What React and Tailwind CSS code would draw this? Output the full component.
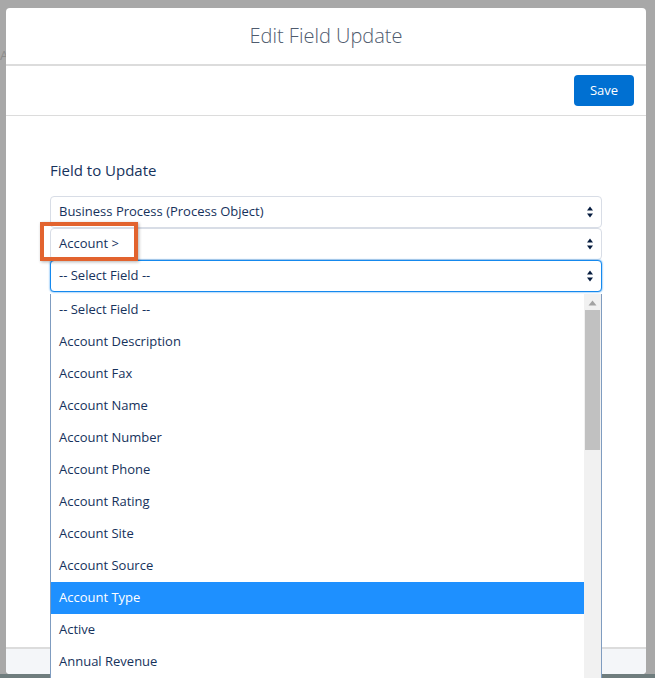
import React from 'react'

const fields = [
  'Account Description',
  'Account Fax',
  'Account Name',
  'Account Number',
  'Account Phone',
  'Account Rating',
  'Account Site',
  'Account Source',
  'Account Type',
  'Active',
  'Annual Revenue',
]

function Arrows() {
  return (
    <svg width="8" height="14" viewBox="0 0 8 14" className="shrink-0">
      <path d="M4 1.5 L7 5.5 H1 Z" fill="#061c3f" />
      <path d="M4 12.5 L7 8.5 H1 Z" fill="#061c3f" />
    </svg>
  )
}

function SelectBox({ label, focused }) {
  return (
    <div
      className={
        'flex h-[32px] items-center justify-between rounded-[4px] border bg-white pl-[8px] pr-[7px] text-[13px] text-[#16325c] ' +
        (focused ? 'border-[#1589ee] shadow-[0_0_2px_#1589ee]' : 'border-[#d8dde6]')
      }
    >
      <span>{label}</span>
      <Arrows />
    </div>
  )
}

export default function App() {
  return (
    <div
      className="relative h-[678px] w-[655px] overflow-hidden bg-[#a8a8a8]"
      style={{ fontFamily: '"Open Sans", "Noto Sans", sans-serif' }}
    >
      {/* faint page content behind the scrim */}
      <div className="absolute left-0 top-0 flex h-full w-[6px] flex-col text-[13px] text-[#8c8c8c]">
        <span className="mt-[46px]">Ac</span>
      </div>

      {/* ── Modal ───────────────────────────────────────────────────── */}
      <div className="absolute left-[6px] top-[8px] flex h-[666px] w-[640px] flex-col rounded-[4px] bg-white">
        <header className="flex h-[58px] shrink-0 items-center justify-center border-b-2 border-[#dcdcdc]">
          <h1 className="text-[20px] font-light text-[#4f5b6e]">Edit Field Update</h1>
        </header>

        <div className="flex h-[50px] shrink-0 items-center justify-end border-b border-[#dcdcdc] pr-[12px]">
          <button className="h-[31px] w-[60px] rounded-[4px] bg-[#0070d2] text-[13px] text-white">
            Save
          </button>
        </div>

        <div className="flex-1 px-[44px] pt-[44px]">
          <h2 className="text-[15px] leading-[20px] text-[#16325c]">Field to Update</h2>

          <div className="relative mt-[16px] flex flex-col">
            <SelectBox label="Business Process (Process Object)" />
            <SelectBox label="Account >" />
            <SelectBox label="-- Select Field --" focused />

            {/* annotation box */}
            <div className="absolute left-[-10px] top-[26px] h-[39px] w-[98px] border-[4px] border-[#e2632e] shadow-[1px_1px_3px_rgba(0,0,0,0.3)]" />

            {/* open dropdown list */}
            <div className="absolute left-0 top-[98px] z-10 flex h-[400px] w-[552px] border-x border-[#7f9cc0] bg-white">
              <ul className="flex-1 text-[13px] text-[#16325c]">
                <li className="flex h-[32px] items-center pl-[8px]">-- Select Field --</li>
                {fields.map((f) => (
                  <li
                    key={f}
                    className={
                      'flex h-[32px] items-center pl-[8px] ' +
                      (f === 'Account Type' ? 'bg-[#1e90ff] text-white' : '')
                    }
                  >
                    {f}
                  </li>
                ))}
              </ul>
              <div className="flex w-[17px] flex-col items-center bg-[#f1f1f1]">
                <svg width="9" height="6" viewBox="0 0 9 6" className="mt-[6px]">
                  <path d="M4.5 0.5 L8.5 5.5 H0.5 Z" fill="#a3a3a3" />
                </svg>
                <div className="mt-[4px] h-[140px] w-[15px] bg-[#c1c1c1]" />
              </div>
            </div>
          </div>
        </div>

        <footer className="h-[27px] shrink-0 rounded-b-[4px] border-t-2 border-[#dcdcdc] bg-[#f4f6f9]" />
      </div>

      <div className="absolute bottom-0 left-0 h-[4px] w-full bg-[#6f7d7e]" />
    </div>
  )
}
